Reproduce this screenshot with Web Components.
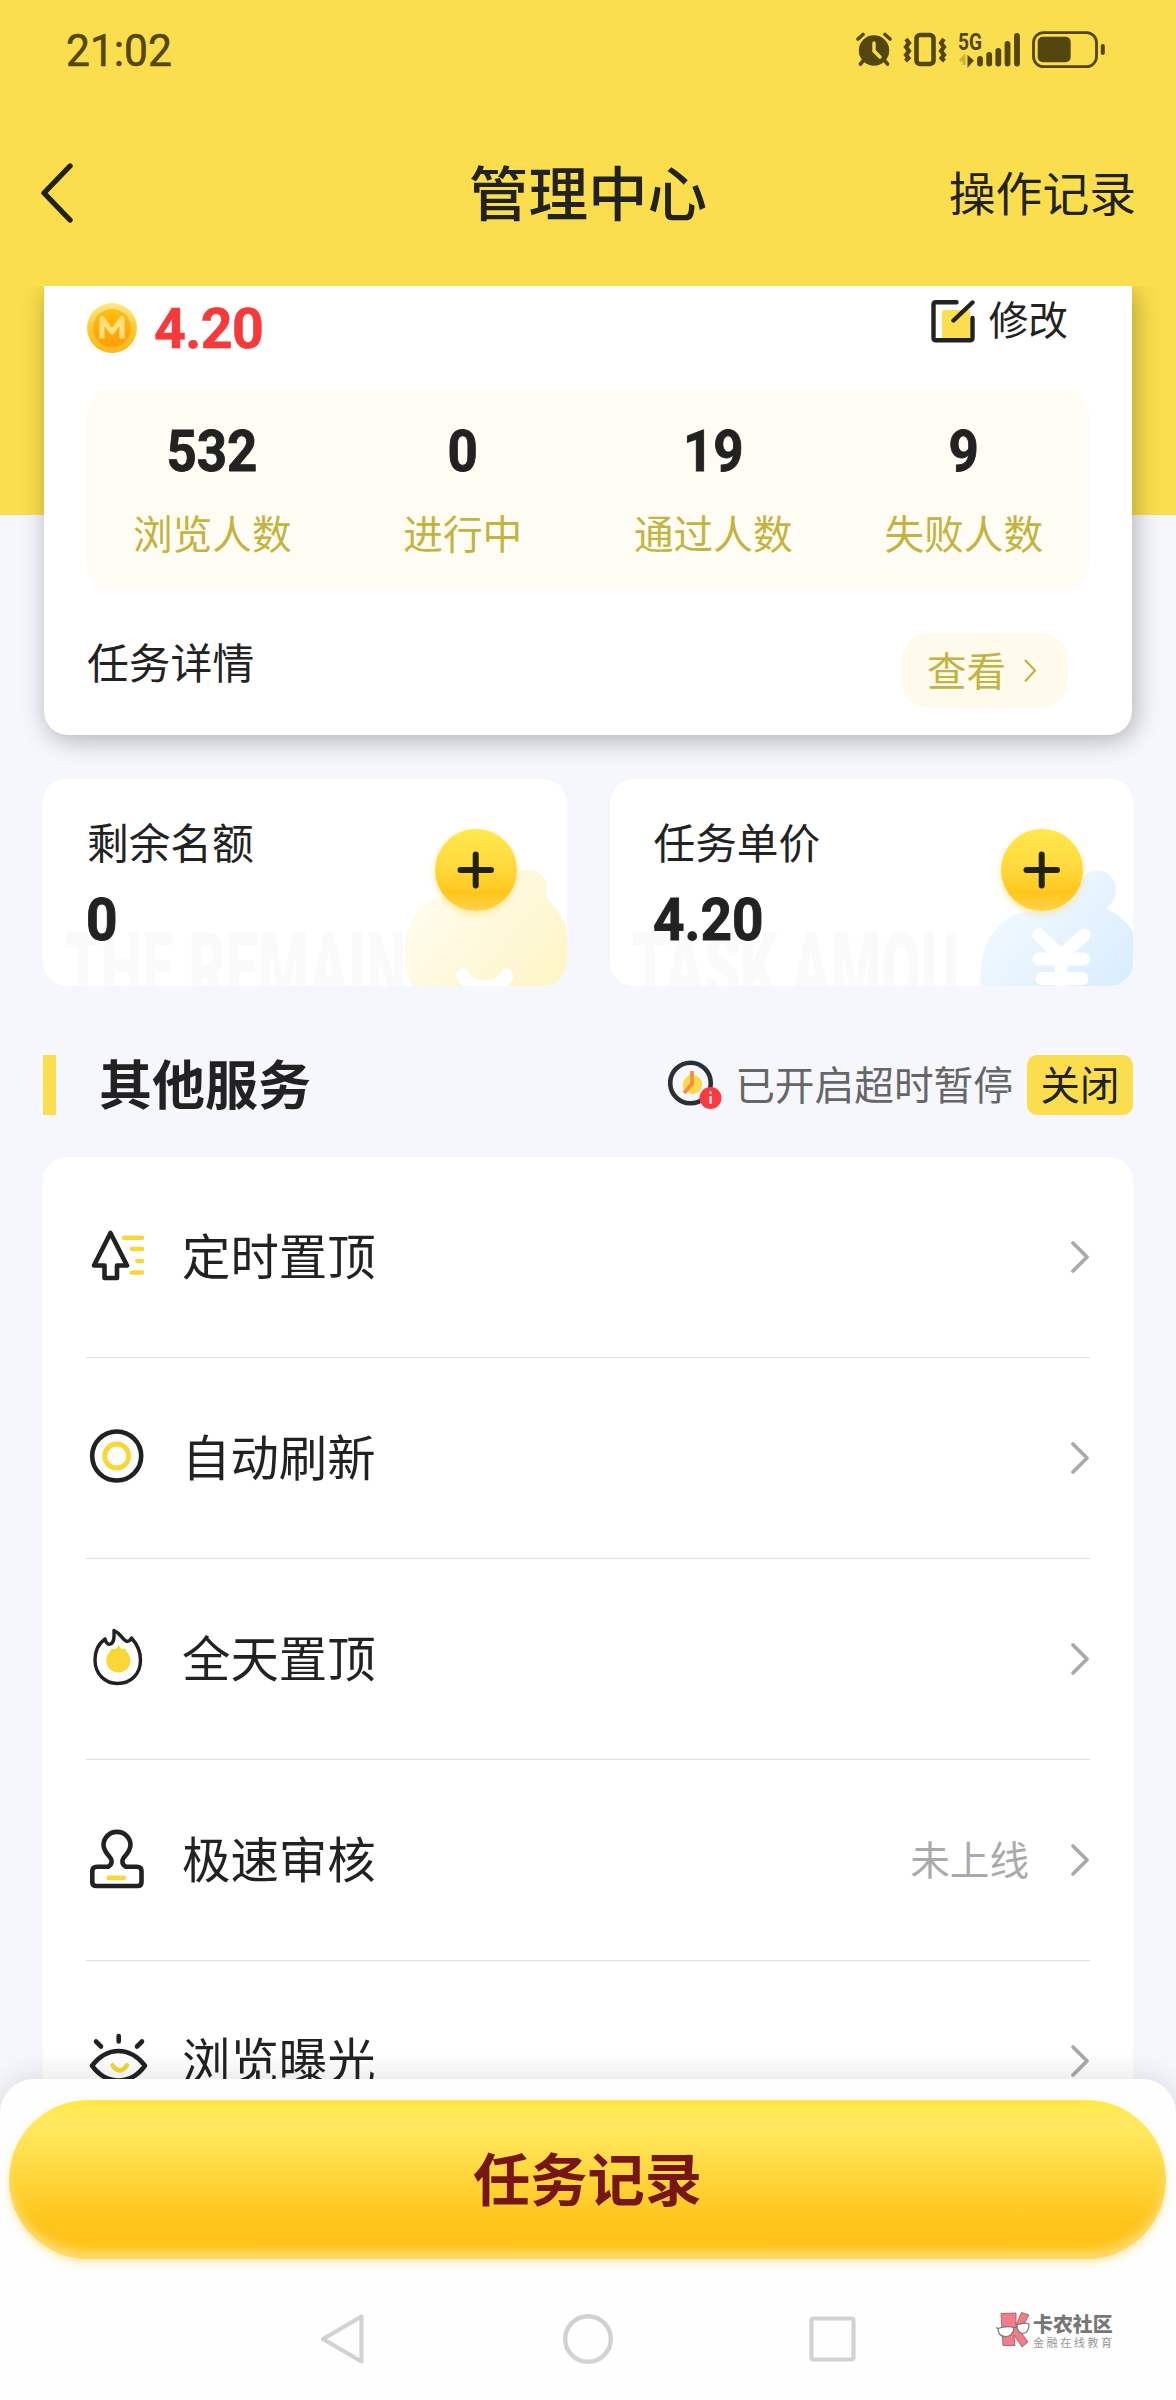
<!DOCTYPE html>
<html lang="zh-CN">
<head>
<meta charset="utf-8">
<title>管理中心</title>
<style>
html,body{margin:0;padding:0}
body{width:1176px;height:2400px;overflow:hidden;background:#f5f7fc;color:#222;
font-family:"Noto Sans CJK SC","Noto Sans",sans-serif;--num:Roboto,"Noto Sans",sans-serif}
</style>
</head>
<body>
<app-page>
  <status-bar slot="top" time="21:02"></status-bar>
  <nav-header slot="top" action="操作记录">管理中心</nav-header>
  <summary-card price="4.20">
    <stat-item value="532">浏览人数</stat-item>
    <stat-item value="0">进行中</stat-item>
    <stat-item value="19">通过人数</stat-item>
    <stat-item value="9">失败人数</stat-item>
  </summary-card>
  <quota-row>
    <quota-card value="0" tone="gold" ghost="THE REMAIN">剩余名额</quota-card>
    <quota-card value="4.20" tone="blue" ghost="TASK AMOU">任务单价</quota-card>
  </quota-row>
  <section-head note="已开启超时暂停" action="关闭">其他服务</section-head>
  <service-list>
    <service-row icon="top">定时置顶</service-row>
    <service-row icon="refresh">自动刷新</service-row>
    <service-row icon="flame">全天置顶</service-row>
    <service-row icon="stamp" note="未上线">极速审核</service-row>
    <service-row icon="eye">浏览曝光</service-row>
  </service-list>
  <bottom-sheet slot="bottom">任务记录</bottom-sheet>
</app-page>

<script>
const define = (name, render) => customElements.define(name, class extends HTMLElement {
  connectedCallback() {
    if (this.shadowRoot) return;
    this.attachShadow({ mode: 'open' }).innerHTML = render(this);
  }
});
const attr = (el, n) => el.getAttribute(n) || '';

define('app-page', () => `
<style>
:host{display:flex;flex-direction:column;width:1176px;height:2400px;overflow:hidden}
header{flex:0 0 286px;background:#fbde4e;display:flex;flex-direction:column}
main{flex:0 0 1824px;overflow:hidden;background:linear-gradient(#fbde4e 229px,#f5f7fc 229px)}
</style>
<header><slot name="top"></slot></header>
<main><slot></slot></main>
<slot name="bottom"></slot>`);

define('status-bar', el => `
<style>
:host{display:flex;justify-content:space-between;align-items:center;height:100px;padding:0 70px 0 66px;color:#53470f}
.t{font:400 45px/60px var(--num);transform:scaleX(.945);transform-origin:0 50%;margin-top:2px;-webkit-text-stroke:.6px #53470f}
.g{display:block}
</style>
<span class="t">${attr(el, 'time')}</span>
<svg class="g" width="250" height="40" viewBox="856 30 250 40" fill="none" stroke="#53470f" stroke-linecap="round">
  <circle cx="874" cy="50.5" r="15.2" fill="#53470f" stroke="none"/>
  <path d="M858 39l5-4.5M890 39l-5-4.5M863 61l-2.500 3M885 61l2.500 3" stroke-width="3.600"/>
  <path d="M874 43v8l6 6" stroke="#fbde4e" stroke-width="3.400"/>
  <rect x="916.500" y="35" width="17" height="29" rx="3.500" stroke-width="4.600"/>
  <path d="M906 39l3 4-3 4 3 4-3 4 2.500 3-3 3M944 39l-3 4 3 4-3 4 3 4-2.500 3 3 3" stroke-width="4.200" stroke-linecap="butt"/>
  <text x="958" y="49.500" font-family="Roboto,sans-serif" font-weight="700" font-size="23.500" textLength="24" lengthAdjust="spacingAndGlyphs" fill="#53470f" stroke="none">5G</text>
  <path d="M964 65V57l-4 4" stroke="#c8b43c" stroke-width="3" stroke-linecap="butt"/>
  <path d="M968.500 57v8l4-4.500z" fill="#53470f" stroke-width="2"/>
  <path d="M980 59v4.500M989.200 55v8.500M998.300 51v12.500M1007.500 44v19.500M1017 36v27.500" stroke-width="5.800"/>
  <rect x="1033.500" y="32.600" width="63" height="34" rx="10" stroke-width="2.800"/>
  <rect x="1037.700" y="36.700" width="33" height="25.500" rx="5" fill="#53470f" stroke="none"/>
  <path d="M1102.800 46v7" stroke-width="4"/>
</svg>`);

define('nav-header', el => `
<style>
:host{display:grid;grid-template-columns:1fr auto 1fr;align-items:center;height:186px;padding:0 40px;box-sizing:border-box}
svg{display:block}
h1{margin:0 0 7px;font-size:59.600px;line-height:80px;font-weight:500}
span{justify-self:end;font-size:46.8px;line-height:60px;margin-bottom:5px}
</style>
<svg width="34" height="60" fill="none" stroke="#222214" stroke-width="5.400" stroke-linecap="round" stroke-linejoin="round"><path d="M30 3L4 30l26 27"/></svg>
<h1><slot></slot></h1><span>${attr(el, 'action')}</span>`);

define('summary-card', el => `
<style>
:host{display:block;box-sizing:border-box;height:449px;margin:0 44px;padding:0 43px;background:#fff;border-radius:0 0 24px 24px;box-shadow:3px 5px 26px rgba(0,0,0,.29)}
svg{display:block}
.row{display:flex;justify-content:space-between;align-items:flex-start;height:104px}
.price{display:flex;align-items:center;height:84px;gap:17px}
.price b{font:700 55.500px/60px var(--num);color:#f63a3c;margin-top:3px;letter-spacing:-.6px;-webkit-text-stroke:.6px #f63a3c}
.edit{display:flex;align-items:center;height:70px;gap:14px;margin-right:21px}
.edit span{font-size:39.700px;line-height:50px;margin-bottom:7px}
.edit svg{margin-left:2px}
.stats{display:grid;grid-template-columns:repeat(4,1fr);height:199px;border-radius:24px;background:#fffdf3}
.foot{display:flex;justify-content:space-between;align-items:flex-start}
.foot>span{font-size:41.800px;line-height:60px;margin-top:42px}
.pill{display:flex;align-items:center;box-sizing:border-box;width:167px;height:75px;padding-left:26px;gap:16px;margin:44px 21px 0 0;border-radius:28px;background:#fffbec;color:#c4b340;font-size:39.500px;line-height:50px}
.pill span{margin-bottom:3px}
</style>
<div class="row">
  <div class="price">
    <svg width="50" height="50" viewBox="0 0 50 50"><defs><linearGradient id="a" x2="0" y2="1"><stop stop-color="#ffe98a"/><stop offset=".5" stop-color="#fccb33"/><stop offset="1" stop-color="#fdb813"/></linearGradient><linearGradient id="b" x2="0" y2="1"><stop stop-color="#ffbe12"/><stop offset="1" stop-color="#ff9c0c"/></linearGradient></defs>
    <circle cx="25" cy="25" r="25" fill="url(#a)"/><circle cx="25" cy="25" r="19" fill="url(#b)"/>
    <path d="M15 35.500V15.500L25 29 35 15.500V35.500" fill="none" stroke="#ffe27c" stroke-width="5" stroke-linejoin="round"/></svg>
    <b>${attr(el, 'price')}</b>
  </div>
  <div class="edit">
    <svg width="44" height="44" viewBox="0 0 44 44" fill="none" stroke="#222" stroke-width="4.400" stroke-linecap="round" stroke-linejoin="round">
    <path d="M11 14q0-3 3-3h25v29H11z" fill="#fbde4e" stroke="none"/>
    <path d="M25.500 3.200H5q-2.500 0-2.500 2.500v33q0 2.500 2.500 2.500h34q2.500 0 2.500-2.500V19"/><path d="M41.500 3.500L22.500 21.500"/></svg>
    <span>修改</span>
  </div>
</div>
<div class="stats"><slot></slot></div>
<div class="foot"><span>任务详情</span>
<div class="pill"><span>查看</span><svg width="16" height="26" viewBox="0 0 16 26" fill="none" stroke="#c4b340" stroke-width="2.200"><path d="M3 2l10 10.500L3 23.500"/></svg></div></div>`);

define('stat-item', el => `
<style>
:host{display:flex;flex-direction:column;align-items:center;gap:21px;padding-top:31px}
b{font:700 58px/60px var(--num);transform:scaleX(.91);-webkit-text-stroke:.9px #222}
span{font-size:39.700px;line-height:60px;color:#c4b340;white-space:nowrap}
</style>
<b>${attr(el, 'value')}</b><span><slot></slot></span>`);

define('quota-row', () => `
<style>:host{display:grid;grid-template-columns:1fr 1fr;gap:43px;margin:44px 43px 0}</style><slot></slot>`);

const bags = {
  gold: `<defs><linearGradient id="g" x1="0" y1=".2" x2="1" y2=".8"><stop stop-color="#fffdf2"/><stop offset="1" stop-color="#fef5c8"/></linearGradient></defs>
  <path fill="url(#g)" d="M14 120C2 92 6 54 30 36L62 24 112 18C118 2 134 0 144 8C151 14 150 24 149 30C158 42 166 50 170 64V120Z"/>
  <path d="M66 109Q71 120 88 121Q105 120 110 109" fill="none" stroke="#fff" stroke-width="13" stroke-linecap="round"/>`,
  blue: `<defs><linearGradient id="g" x1="0" y1=".2" x2="1" y2=".9"><stop stop-color="#f6fbff"/><stop offset="1" stop-color="#d9edfe"/></linearGradient></defs>
  <path fill="url(#g)" d="M18 120C15 92 24 62 52 48L100 40 122 10C130 2 142 3 149 12C156 22 154 34 143 42C155 48 165 57 170 66V120Z"/>
  <path d="M76 69L98 90 121 69M76 93h45M79 112.500h40M98 92V119" fill="none" stroke="#fff" stroke-width="13" stroke-linecap="round" stroke-linejoin="round"/>`
};
define('quota-card', el => `
<style>
:host{display:flex;justify-content:space-between;position:relative;overflow:hidden;height:207px;border-radius:24px;background:#fff;box-sizing:border-box;padding:32px 50px 0 44px}
.txt{display:flex;flex-direction:column;gap:19px;z-index:1}
.lab{font-size:41.700px;line-height:60px}
.txt b{font:700 58.500px/60px var(--num);transform:scaleX(.94);transform-origin:0 50%;margin-left:-1px;-webkit-text-stroke:.9px #222}
.plus{width:82px;height:82px;margin-top:18px;border-radius:50%;z-index:1;display:flex;background:linear-gradient(#ffe84e,#ffda3e 45%,#ffc61c 78%,#ffd24c);box-shadow:0 3px 7px rgba(255,222,100,.6)}
.bag{position:absolute;right:0;bottom:0}
.ghost{position:absolute;left:22px;top:141px;font:900 96px/96px var(--num);color:#fafafa;white-space:nowrap;transform:scaleX(.6);transform-origin:0 0}
</style>
<span class="ghost">${attr(el, 'ghost')}</span>
<svg class="bag" width="170" height="120" viewBox="0 0 170 120">${bags[attr(el, 'tone')]}</svg>
<div class="txt"><span class="lab"><slot></slot></span><b>${attr(el, 'value')}</b></div>
<div class="plus"><svg width="82" height="82" stroke="#222211" stroke-width="6" stroke-linecap="round"><path d="M25.500 41h30.500M40.700 25.500v31"/></svg></div>`);

define('section-head', el => `
<style>
:host{display:flex;align-items:center;height:61px;margin:68px 43px 0}
i{width:13px;height:60px;background:#fbde4e}
h2{margin:0 auto 5px 43px;font-size:53px;line-height:61px;font-weight:700}
svg{display:block;margin-right:13px}
.n{font-size:39.700px;line-height:50px;color:#666;margin:0 14px 3px 0}
.b{width:106px;height:60px;border-radius:10px;background:#fbde4e;font-size:39.400px;line-height:55px;text-align:center}
</style>
<i></i><h2><slot></slot></h2>
<svg width="54" height="50" viewBox="0 0 54 50" fill="none"><circle cx="22.500" cy="23" r="20.300" stroke="#2b3036" stroke-width="4.600"/><circle cx="24.500" cy="24.500" r="9.700" fill="#fbd94a"/><path d="M24 11v13l-8 9" stroke="#f1913f" stroke-width="3.800"/><circle cx="42.500" cy="38" r="11" fill="#fb3b41"/><path d="M42.500 36v8M42.500 31.500v2.500" stroke="#ffe1e1" stroke-width="2.400"/></svg>
<span class="n">${attr(el, 'note')}</span><span class="b">${attr(el, 'action')}</span>`);

define('service-list', () => `
<style>:host{display:flex;flex-direction:column;margin:42px 43px 0;padding:0 43px;background:#fff;border-radius:24px 24px 0 0}</style><slot></slot>`);

const Y = '#f8d736';
const icons = {
  top: `<path d="M24.500 6L41 38.500H31V51H18.500V38.500H8Z"/><path stroke="${Y}" d="M38 10.700H56M46 22H56M51.500 34H56M46 45.500H56"/>`,
  refresh: `<circle cx="30.700" cy="28" r="24.500"/><circle cx="30.700" cy="28" r="12" stroke="${Y}" stroke-width="4.800"/>`,
  flame: `<path stroke-width="3.400" d="M28 1.500C28 6 29 13 24.500 15C21 16.500 19.500 12 19 10C12 15 9 22 9 31C9 45 19 54.500 31.500 54.500C45 54.500 54.500 45 54.500 31C54.500 22 51 15 45.500 9C44.500 11.500 42 13 40 12C36 10 35 4.500 28 1.500Z"/><path fill="${Y}" stroke="none" d="M32.700 15.500C34 20 36 20.500 39 19.500L41 23C46 29 45 35 42 39C36 45.500 27 44.500 23 39C19 34 19.500 28 23.500 23L26 19.500C30 21 31.500 19 32.700 15.500Z"/>`,
  stamp: `<path d="M22 36.800C26 35 26.500 31 24.500 28C20 23 17.500 19 17.500 15A13.400 13 0 0 1 44.500 15C44.500 19 42 23 37.500 28C35.500 31 36 35 40 36.800H51Q55.500 36.800 55.500 41V52Q55.500 56 51.500 56H10.500Q6.300 56 6.300 52V41Q6.300 36.800 11 36.800Z"/><path stroke="${Y}" stroke-linecap="butt" d="M21 47.800H39.700"/>`,
  eye: `<path d="M6 34.700C12 27 21 20 32.500 20C44 20 53 27 59 34.700C53 43 44 49.500 32.500 49.500C21 49.500 12 43 6 34.700Z"/><path d="M32.700 5V10.500M10 10.500L15 15.500M56 10.500L51 15.500"/><path stroke="${Y}" d="M26.500 34.300Q33.500 44.500 41 34.300"/>`
};
define('service-row', el => `
<style>
:host{display:flex;align-items:center;box-sizing:border-box;height:201px;border-bottom:1px solid #e0e0e0}
svg{display:block;overflow:visible}
.l{font-size:48.400px;line-height:60px;margin:0 auto 6px 36px}
.n{font-size:39.600px;line-height:50px;color:#aaa;margin:0 41px 4px 0}
</style>
<svg width="60" height="60" viewBox="0 0 60 60" fill="none" stroke="#222" stroke-width="4.600" stroke-linecap="round" stroke-linejoin="round">${icons[attr(el, 'icon')]}</svg>
<span class="l"><slot></slot></span>
${attr(el, 'note') ? `<span class="n">${attr(el, 'note')}</span>` : ''}
<svg width="20" height="34" viewBox="0 0 20 34" fill="none" stroke="#aaa" stroke-width="3.800" stroke-linecap="round" stroke-linejoin="round"><path d="M3 3l14 14-14 14"/></svg>`);

define('bottom-sheet', () => `
<style>
:host{display:flex;flex-direction:column;position:relative;flex:1;margin-top:-31px;padding:21px 10px 0 9px;border-radius:34px 34px 0 0;background:#fefefe;box-shadow:0 0 34px rgba(0,0,0,.14)}
button{display:block;flex:none;height:159px;border:0;border-radius:80px;padding:0 0 6px;font:700 57.300px/80px "Noto Sans CJK SC",sans-serif;color:#761616;
background:linear-gradient(#ffe94a 0,#ffe94a 4%,#ffea60 11%,#ffe75c 20%,#ffd53a 50%,#ffc51c 76%,#ffc416 100%);
box-shadow:0 4px 9px rgba(255,220,100,.5),inset 0 -8px 10px rgba(255,225,140,.75)}
nav{display:flex;justify-content:center;align-items:center;gap:195px;height:160px}
svg{display:block}
aside{position:absolute;left:996px;top:233px;display:flex;gap:3px}
.w{display:flex;flex-direction:column;gap:1px;margin-top:1px}
.w b{font-size:19.900px;line-height:22px;font-weight:900;color:#777}
.w span{font-size:11.200px;line-height:12px;letter-spacing:2.400px;color:#999;white-space:nowrap}
</style>
<button><slot></slot></button>
<nav>
<svg width="50" height="54" fill="none" stroke="#d2d2d2" stroke-width="4.200" stroke-linejoin="round"><path d="M5 27L43.500 4.500V49.500Z"/></svg>
<svg width="50" height="54" fill="none" stroke="#d2d2d2" stroke-width="4.400"><circle cx="25" cy="27" r="22.800"/></svg>
<svg width="50" height="54" fill="none" stroke="#d2d2d2" stroke-width="4.200"><rect x="3.500" y="6.500" width="42" height="41" rx="2"/></svg>
</nav>
<aside>
<svg width="34" height="36" viewBox="0 0 34 36" stroke="#8a5a5e" stroke-width=".8"><path fill="#f47c88" d="M5 1.500L20 1v12L25.500.5 33 3 24 19l8 11-6 5-8-12 1 10.500H7z"/><path fill="#fff" stroke="#777" stroke-width="1.200" d="M2 16.500q8-3 16-1-1 9-8.500 9T2 16.500zM21 13q7-3 12-1 0 9-6 9.500-6-.5-6-8.500zM18 16l3-2M0 15.500l2 1"/></svg>
<div class="w"><b>卡农社区</b><span>金融在线教育</span></div>
</aside>`);
</script>
</body>
</html>
